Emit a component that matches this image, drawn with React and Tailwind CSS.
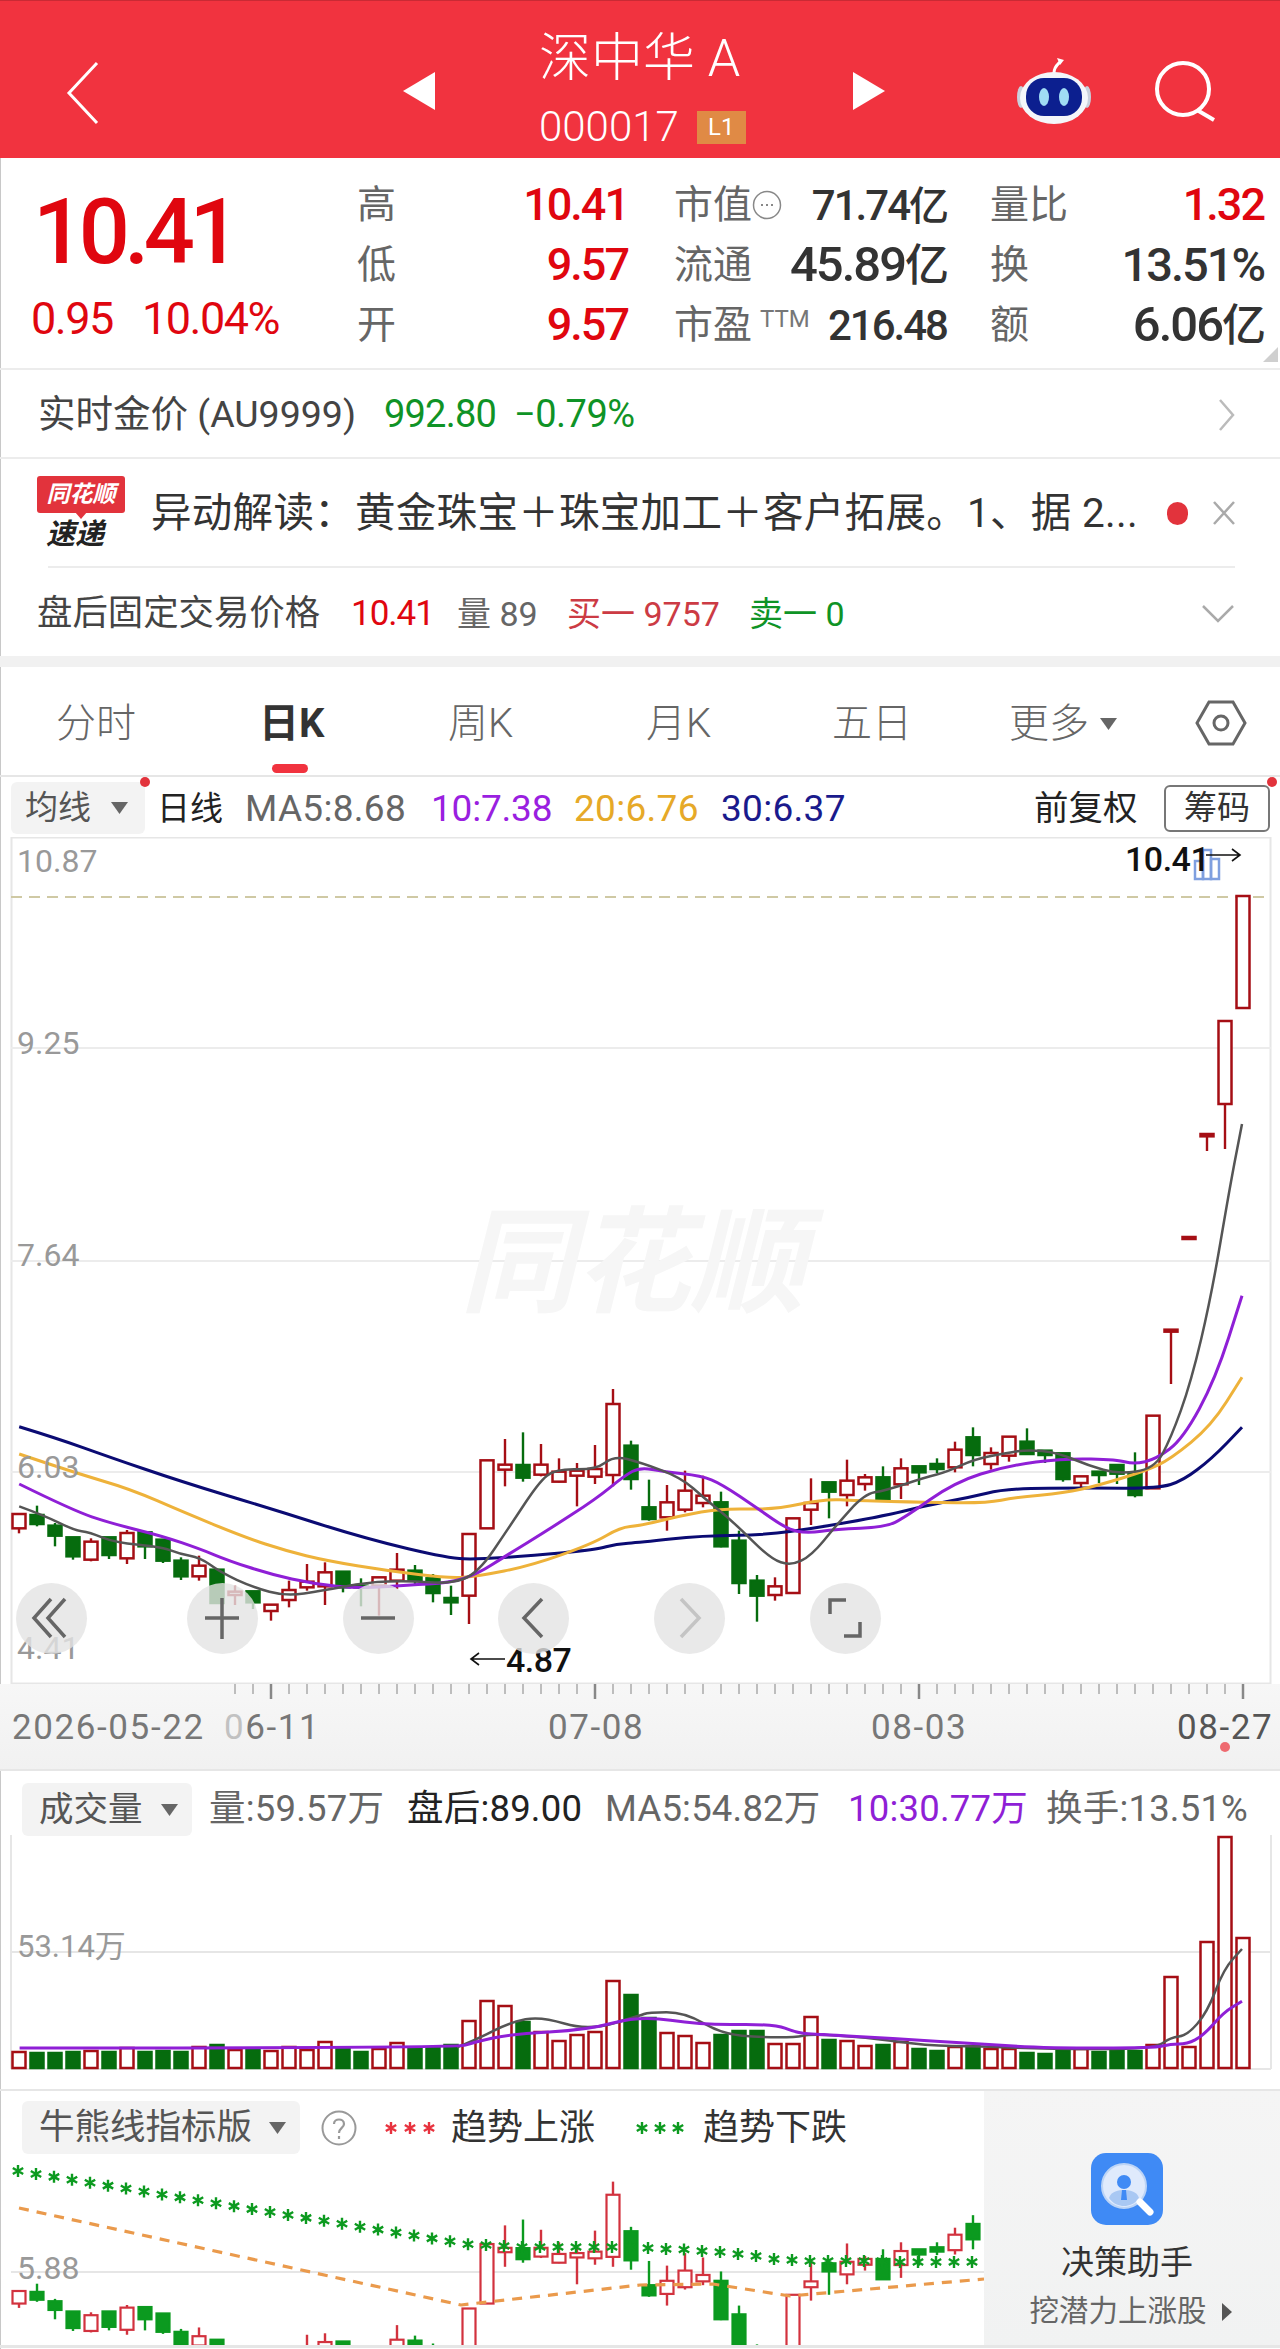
import React from "react";

// candle data read off the chart: [high, bodyTop, bodyBottom, low, isUp], y in 3x zoom units
const candles = [
  [645, 645, 688, 703, 1], [620, 648, 675, 682, 0], [672, 680, 710, 742, 0], [715, 715, 772, 782, 0],
  [718, 728, 782, 787, 1], [715, 715, 768, 780, 0], [693, 702, 778, 795, 1], [700, 700, 742, 780, 0],
  [722, 722, 785, 792, 0], [775, 785, 832, 843, 0], [770, 800, 832, 845, 1], [812, 812, 912, 912, 0],
  [860, 878, 888, 918, 1], [877, 877, 910, 930, 0], [917, 917, 936, 965, 1], [845, 873, 903, 925, 1],
  [795, 848, 865, 875, 1], [790, 820, 862, 918, 1], [818, 818, 865, 880, 0], [838, 860, 865, 922, 0],
  [835, 835, 860, 950, 1], [762, 812, 845, 870, 1], [798, 815, 845, 855, 0], [825, 838, 882, 910, 0],
  [860, 897, 910, 948, 0], [705, 705, 890, 975, 1], [484, 484, 688, 688, 1], [420, 497, 512, 562, 1],
  [400, 498, 536, 548, 0], [435, 497, 527, 532, 1], [478, 518, 548, 550, 1], [492, 515, 530, 622, 1],
  [438, 510, 533, 555, 1], [270, 315, 528, 562, 1], [425, 440, 540, 572, 0], [542, 625, 660, 665, 0],
  [558, 610, 655, 695, 1], [515, 575, 632, 640, 1], [530, 590, 612, 625, 1], [578, 610, 742, 745, 0],
  [695, 725, 852, 885, 0], [828, 845, 890, 968, 0], [835, 862, 888, 905, 1], [658, 658, 882, 882, 1],
  [538, 612, 632, 678, 1], [550, 550, 578, 658, 0], [482, 545, 588, 622, 1], [525, 535, 555, 575, 1],
  [502, 535, 605, 605, 0], [478, 508, 556, 600, 1], [502, 502, 520, 558, 0], [478, 495, 510, 522, 0],
  [428, 452, 505, 520, 1], [385, 415, 468, 502, 0], [445, 462, 495, 512, 1], [413, 413, 470, 488, 1],
  [388, 428, 465, 465, 0], [455, 455, 468, 492, 0], [463, 463, 540, 548, 0], [532, 532, 552, 565, 1],
  [518, 518, 528, 552, 0], [498, 498, 524, 555, 0], [460, 525, 588, 595, 0], [350, 350, 568, 568, 1],
  [92, 92, 98, 255, 1], [-186, -186, -180, -180, 1], [-495, -495, -488, -444, 1], [-834, -834, -585, -450, 1],
  [-1209, -1209, -873, -873, 1],
];

const volTops = [
  2053, 2054, 2054, 2053, 2052, 2053, 2049, 2053, 2052, 2053, 2048, 2046, 2051, 2050, 2052, 2048, 2051, 2043,
  2050, 2053, 2050, 2044, 2050, 2049, 2046, 2022, 2002, 2007, 2023, 2033, 2042, 2036, 2033, 1982, 1996, 2019,
  2034, 2037, 2044, 2036, 2032, 2032, 2045, 2045, 2018, 2041, 2042, 2047, 2046, 2043, 2050, 2052, 2048, 2047,
  2050, 2050, 2054, 2055, 2051, 2050, 2053, 2052, 2052, 2046, 1978, 2048, 1943, 1838, 1939,
];

const cx = (i) => 19 + 18 * i;
const yMain = (z) => 1300 + z / 3;
const yLow = (z) => 2292 + 0.875 * (yMain(z) - 1515);

// left half and right half of the zoomed chart, in zoom units
const L = (pts) => pts.map(([x, y]) => [x / 2.45, 1300 + y / 3]);
const R = (pts) => pts.map(([x, y]) => [640 + x / 2.45, 1300 + y / 3]);

const smooth = (pts) => {
  let d = `M${pts[0][0].toFixed(1)} ${pts[0][1].toFixed(1)}`;
  for (let i = 1; i < pts.length - 1; i++) {
    const mx = (pts[i][0] + pts[i + 1][0]) / 2;
    const my = (pts[i][1] + pts[i + 1][1]) / 2;
    d += ` Q${pts[i][0].toFixed(1)} ${pts[i][1].toFixed(1)} ${mx.toFixed(1)} ${my.toFixed(1)}`;
  }
  const last = pts[pts.length - 1];
  return d + ` L${last[0].toFixed(1)} ${last[1].toFixed(1)}`;
};

const ma30 = [
  ...L([[47, 383], [140, 418], [270, 475], [445, 548], [660, 628], [900, 720], [1100, 778], [1170, 781], [1300, 770], [1460, 752], [1510, 735]]),
  ...R([[0, 730], [150, 710], [330, 708], [590, 653], [700, 620], [800, 597], [900, 568], [1100, 567], [1270, 568], [1330, 545], [1400, 480], [1475, 385]]),
];
const ma20 = [
  ...L([[47, 465], [180, 520], [320, 570], [450, 640], [600, 715], [700, 755], [800, 785], [950, 815], [1100, 838], [1170, 832], [1300, 800], [1450, 735], [1520, 685]]),
  ...R([[0, 680], [100, 650], [200, 628], [330, 632], [450, 600], [530, 605], [700, 610], [850, 612], [920, 595], [1040, 582], [1120, 560], [1240, 515], [1300, 480], [1400, 380], [1475, 235]]),
];
const ma10 = [
  ...L([[47, 555], [180, 635], [270, 672], [400, 712], [490, 750], [560, 785], [660, 825], [770, 855], [880, 868], [1000, 858], [1100, 852], [1170, 825], [1240, 770], [1340, 695], [1460, 600], [1530, 530]]),
  ...R([[0, 505], [60, 518], [150, 530], [200, 555], [290, 630], [360, 690], [410, 703], [480, 690], [600, 685], [650, 655], [770, 550], [900, 500], [1040, 478], [1170, 482], [1210, 496], [1265, 480], [1330, 420], [1410, 240], [1475, -10]]),
];
const ma5 = [
  ...L([[47, 622], [110, 650], [180, 693], [220, 700], [280, 730], [400, 745], [440, 765], [490, 775], [540, 820], [620, 865], [700, 892], [790, 875], [900, 850], [1000, 845], [1100, 855], [1170, 825], [1250, 680], [1320, 550], [1360, 510], [1460, 512], [1505, 470]]),
  ...R([[0, 490], [100, 535], [160, 600], [230, 670], [320, 780], [370, 800], [420, 770], [480, 680], [550, 585], [600, 575], [700, 535], [750, 520], [820, 480], [900, 462], [950, 452], [1020, 460], [1100, 500], [1170, 525], [1260, 510], [1300, 420], [1350, 250], [1400, -10]]),
  [1230, 1187], [1242, 1125],
];

const V = (half, pts) => pts.map(([x, y]) => [(half ? 640 : 0) + x / 2.45, 1750 + y / 3]);
const vol5 = [
  ...V(0, [[1120, 895], [1170, 870], [1250, 820], [1325, 802], [1440, 845]]),
  ...V(1, [[0, 800], [20, 790], [110, 790], [200, 855], [300, 865], [380, 865], [420, 855], [560, 865], [700, 890], [830, 892], [1000, 900], [1260, 900], [1300, 865], [1340, 860], [1390, 790], [1430, 660], [1475, 600]]),
];
const vol10 = [
  ...V(0, [[48, 897], [1120, 897], [1160, 880], [1250, 855], [1440, 843]]),
  ...V(1, [[0, 800], [150, 828], [330, 825], [380, 850], [420, 855], [620, 868], [830, 885], [1000, 897], [1260, 897], [1300, 885], [1340, 885], [1380, 860], [1430, 790], [1475, 757]]),
];

const starY = [
  ...Array.from({ length: 26 }, (_, i) => 2172 + i * 2.93),
  2246, 2247, 2248, 2248, 2248, 2248, 2248, 2248, 2248, 2249, 2250, 2250.5, 2252, 2253, 2255, 2257, 2260, 2261, 2262, 2262, 2262, 2262, 2262, 2263, 2263, 2263, 2263, 2263,
];

const Star = ({ x, y, r = 6, color }) => {
  const a = r * 0.5;
  const b = r * 0.866;
  return (
    <path
      d={`M${x} ${y - r}V${y + r}M${x - b} ${y - a}L${x + b} ${y + a}M${x - b} ${y + a}L${x + b} ${y - a}`}
      stroke={color}
      strokeWidth="2.4"
      fill="none"
    />
  );
};

const Candles = ({ yOf, upColor, downColor, count, sw = 2.5 }) =>
  candles.slice(0, count).map(([hi, top, bot, lo, up], i) => {
    const x = cx(i);
    const color = up ? upColor : downColor;
    return (
      <g key={i}>
        <line x1={x} x2={x} y1={yOf(hi)} y2={yOf(lo)} stroke={color} strokeWidth="2.4" />
        <rect
          x={x - 6.5}
          y={yOf(top)}
          width="13"
          height={Math.max(yOf(bot) - yOf(top), 1)}
          fill={up ? "#fff" : color}
          stroke={color}
          strokeWidth={sw}
        />
      </g>
    );
  });

const Triangle = ({ className }) => (
  <svg width="19" height="14" viewBox="0 0 19 14" className={className}>
    <path d="M1 1H18L9.5 13Z" fill="#666" />
  </svg>
);

const Robot = () => (
  <svg width="76" height="70" viewBox="0 0 76 70">
    <path d="M38 18C38 12 41 10 44 7" stroke="#fff" strokeWidth="3" fill="none" />
    <path d="M41 3L48 5L44 10Z" fill="#fff" />
    <ellipse cx="5" cy="42" rx="4" ry="11" fill="#c9d0dc" />
    <ellipse cx="71" cy="42" rx="4" ry="11" fill="#c9d0dc" />
    <ellipse cx="38" cy="43" rx="34" ry="26" fill="#f4f6fa" />
    <rect x="10" y="23" width="56" height="38" rx="18" fill="#0c1f8f" />
    <ellipse cx="28" cy="42" rx="5" ry="9" fill="#9fdcf5" />
    <ellipse cx="48" cy="42" rx="5" ry="9" fill="#9fdcf5" />
  </svg>
);

const Chip = ({ label, className }) => (
  <div className={`flex items-center bg-[#f3f3f3] rounded-md ${className}`}>
    <span>{label}</span>
    <Triangle className="ml-auto" />
  </div>
);

const StatRow = ({ label, value, color, size = "text-[45px]" }) => (
  <div className="flex items-center justify-between h-[60px]">
    <span className="text-[39px] text-[#666] flex items-center">{label}</span>
    <span className={`tracking-[-2px] font-medium ${size} ${color}`}>{value}</span>
  </div>
);

const PRICE = "text-[#e0060f]";
const DARK = "text-[#333]";

const priceLabels = [
  ["10.87", 846], ["9.25", 1028], ["7.64", 1240], ["6.03", 1452], ["4.41", 1633],
];

export default function App() {
  return (
    <div className="relative w-[1280px] h-[2349px] overflow-hidden bg-white font-['Roboto','Noto_Sans_CJK_SC',sans-serif] shadow-[inset_1px_0_0_#c8c8c8]">
      {/* title bar */}
      <div className="flex items-center h-[158px] pt-[22px] bg-[#f1333f] border-t border-[#c92a34]">
        <svg width="36" height="64" viewBox="0 0 36 64" className="ml-[65px] mt-[4px]">
          <path d="M32 2L4 32L32 62" stroke="#fff" strokeWidth="3" fill="none" />
        </svg>
        <svg width="34" height="38" viewBox="0 0 34 38" className="ml-[301px]">
          <path d="M33 0V38L1 19Z" fill="#fff" />
        </svg>
        <div className="ml-[106px] w-[315px] flex flex-col text-white">
          <div className="text-[52px] leading-[58px] font-light mt-[-4px] ml-[-3px]">深中华 A</div>
          <div className="flex items-center mt-[19px] h-[40px] ml-[-3px]">
            <span className="text-[42px] font-light leading-none">000017</span>
            <span className="ml-[18px] w-[49px] h-[33px] bg-[#e08a45] flex items-center justify-center text-[24px] leading-none">
              L1
            </span>
          </div>
        </div>
        <svg width="34" height="38" viewBox="0 0 34 38" className="ml-[-5px]">
          <path d="M1 0V38L33 19Z" fill="#fff" />
        </svg>
        <div className="ml-[130px] mt-[-2px]">
          <Robot />
        </div>
        <svg width="62" height="62" viewBox="0 0 62 62" className="ml-[62px]">
          <circle cx="29" cy="29" r="26" stroke="#fff" strokeWidth="4" fill="none" />
          <path d="M43 50L60 60" stroke="#fff" strokeWidth="4" />
        </svg>
      </div>

      {/* quote */}
      <div className="relative flex h-[212px] border-b-2 border-[#ececec]">
        <div className="w-[357px] pl-[31px] pt-[30px] flex flex-col">
          <div className={`text-[90px] leading-none font-medium tracking-[-5.5px] ml-[2px] ${PRICE}`}>10.41</div>
          <div className={`flex text-[45px] leading-none mt-[18px] tracking-[-1.5px] ${PRICE}`}>
            <span className="w-[111px]">0.95</span>
            <span>10.04%</span>
          </div>
        </div>
        <div className="w-[271px] pt-[17px]">
          <StatRow label="高" value="10.41" color={PRICE} />
          <StatRow label="低" value="9.57" color={PRICE} />
          <StatRow label="开" value="9.57" color={PRICE} />
        </div>
        <div className="w-[273px] ml-[46px] pt-[17px]">
          <StatRow
            label={
              <>
                市值
                <svg width="30" height="30" viewBox="0 0 30 30">
                  <circle cx="15" cy="15" r="13.5" stroke="#888" strokeWidth="1.5" fill="none" />
                  <path d="M9 15h2M14 15h2M19 15h2" stroke="#888" strokeWidth="2" />
                </svg>
              </>
            }
            value={
              <>
                71.74<span className="text-[40px]">亿</span>
              </>
            }
            size="text-[42px]"
            color={DARK}
          />
          <StatRow
            label="流通"
            value={
              <>
                45.89<span className="text-[44px]">亿</span>
              </>
            }
            size="text-[49px]"
            color={DARK}
          />
          <StatRow
            label={
              <>
                市盈<span className="text-[24px] ml-[8px] mt-[-12px] text-[#777]">TTM</span>
              </>
            }
            value="216.48"
            size="text-[42px]"
            color={DARK}
          />
        </div>
        <div className="w-[274px] ml-[43px] pt-[17px]">
          <StatRow label="量比" value="1.32" color={PRICE} />
          <StatRow label="换" value="13.51%" color={DARK} size="text-[47px]" />
          <StatRow
            label="额"
            value={
              <>
                6.06<span className="text-[44px]">亿</span>
              </>
            }
            size="text-[49px]"
            color={DARK}
          />
        </div>
        <div className="absolute right-[2px] bottom-[6px] w-0 h-0 border-l-[15px] border-l-transparent border-b-[15px] border-b-[#cfcfcf]" />
      </div>

      {/* gold price */}
      <div className="flex items-center h-[89px] pl-[38px] pt-[2px] border-b-2 border-[#ececec]">
        <span className="text-[37.5px] text-[#444] w-[346px] whitespace-nowrap">实时金价 (AU9999)</span>
        <span className="text-[38px] text-[#0f9326] tracking-[-0.8px] w-[130px]">992.80</span>
        <span className="text-[38px] text-[#0f9326] tracking-[-0.5px]">−0.79%</span>
        <svg width="18" height="34" viewBox="0 0 18 34" className="ml-auto mr-[44px]">
          <path d="M2 2L15 17L2 32" stroke="#bbb" strokeWidth="2.5" fill="none" />
        </svg>
      </div>

      {/* news ticker */}
      <div className="flex items-center h-[107px] pl-[37px]">
        <div className="w-[114px] flex flex-col">
          <div className="relative w-[88px] h-[37px] bg-[#e2333c] rounded-[3px] flex items-center justify-center text-white text-[23px] font-bold italic leading-none">
            同花顺
            <div className="absolute left-[38px] bottom-[-6px] w-0 h-0 border-x-[6px] border-x-transparent border-t-[7px] border-t-[#e2333c]" />
          </div>
          <div className="text-[29px] leading-none font-bold italic text-[#222] mt-[7px] ml-[9px]">速递</div>
        </div>
        <span className="text-[40.5px] tracking-[0.3px] text-[#333] whitespace-nowrap mt-[1px]">异动解读：黄金珠宝＋珠宝加工＋客户拓展。1、据 2...</span>
        <div className="w-[21px] h-[23px] rounded-full bg-[#e2333c] absolute left-[1167px] top-[502px]" />
        <svg width="24" height="26" viewBox="0 0 24 26" className="absolute left-[1212px] top-[500px]">
          <path d="M2 2L22 24M22 2L2 24" stroke="#aaa" strokeWidth="2.5" />
        </svg>
      </div>
      <div className="h-[2px] ml-[48px] w-[1187px] bg-[#ececec]" />

      {/* after-hours */}
      <div className="flex items-center h-[88px] pl-[37px] pt-[4px]">
        <span className="text-[35.4px] text-[#444] w-[314px] whitespace-nowrap">盘后固定交易价格</span>
        <span className={`text-[35px] w-[106px] tracking-[-1px] ${PRICE}`}>10.41</span>
        <span className="text-[34px] text-[#666] w-[110px] whitespace-nowrap">量 89</span>
        <span className="text-[34px] text-[#cc3b44] w-[182px] whitespace-nowrap">买一 9757</span>
        <span className="text-[34px] text-[#0f9326] whitespace-nowrap">卖一 0</span>
        <svg width="34" height="20" viewBox="0 0 34 20" className="ml-auto mr-[45px]">
          <path d="M2 2L17 17L32 2" stroke="#aaa" strokeWidth="2.5" fill="none" />
        </svg>
      </div>
      <div className="h-[11px] bg-[#f1f1f1]" />

      {/* period tabs */}
      <div className="flex items-center h-[110px] pl-[56px] pt-[6px] border-b-2 border-[#e6e6e6] text-[40px] text-[#666] font-light">
        <div className="w-[203px]">分时</div>
        <div className="relative w-[189px] font-bold text-[#333]">
          日K
          <div className="absolute left-[13px] top-[70px] w-[36px] h-[9px] rounded-full bg-[#f1333f]" />
        </div>
        <div className="w-[198px]">周K</div>
        <div className="w-[186px]">月K</div>
        <div className="w-[177px]">五日</div>
        <div className="w-[186px] flex items-center">
          更多
          <svg width="19" height="14" viewBox="0 0 19 14" className="ml-[10px]">
            <path d="M1 1H18L9.5 13Z" fill="#666" />
          </svg>
        </div>
        <svg width="52" height="46" viewBox="0 0 52 46" className="mt-[-2px]">
          <path d="M14 2H38L50 23L38 44H14L2 23Z" stroke="#666" strokeWidth="3" fill="none" />
          <circle cx="26" cy="23" r="7" stroke="#666" strokeWidth="3" fill="none" />
        </svg>
      </div>

      {/* moving average legend */}
      <div className="relative flex items-center h-[60px] pl-[11px] pt-[4px] text-[37px] tracking-[0.3px] whitespace-nowrap">
        <Chip label="均线" className="w-[134px] h-[52px] pl-[14px] pr-[16px] text-[33px] tracking-normal text-[#555] mt-[-2px]" />
        <span className="absolute left-[140px] top-[0px] w-[10px] h-[10px] rounded-full bg-[#e2333c]" />
        <span className="ml-[12px] w-[88px] text-[33px] tracking-normal text-[#222]">日线</span>
        <span className="w-[186px] text-[#666]">MA5:8.68</span>
        <span className="w-[143px] text-[#9a1fe0] tracking-[-0.2px]">10:7.38</span>
        <span className="w-[147px] text-[#e6a928]">20:6.76</span>
        <span className="w-[313px] text-[#1a1a8c]">30:6.37</span>
        <span className="w-[130px] text-[34.5px] tracking-normal text-[#222]">前复权</span>
        <div className="w-[106px] h-[47px] border-2 border-[#777] rounded-md flex items-center justify-center text-[33px] tracking-normal text-[#333] mt-[-2px]">
          筹码
        </div>
        <span className="absolute left-[1267px] top-[0px] w-[10px] h-[10px] rounded-full bg-[#e2333c]" />
      </div>

      {/* candles */}
      <div className="relative h-[847px]">
        <svg width="1280" height="847" viewBox="0 838 1280 847" className="block">
          <rect x="11.5" y="838.5" width="1259" height="846" fill="none" stroke="#e6e6e6" strokeWidth="2" />
          <line x1="11" x2="1271" y1="1049" y2="1049" stroke="#ececec" strokeWidth="2" />
          <line x1="11" x2="1271" y1="1262" y2="1262" stroke="#ececec" strokeWidth="2" />
          <line x1="11" x2="1271" y1="1473" y2="1473" stroke="#ececec" strokeWidth="2" />
          <line x1="11" x2="1271" y1="898" y2="898" stroke="#cfc9a4" strokeWidth="2" strokeDasharray="11 7" />
          <Candles yOf={yMain} upColor="#a50e14" downColor="#066c0e" count={69} />
          <path d={smooth(ma30)} stroke="#0b0b73" strokeWidth="3" fill="none" />
          <path d={smooth(ma20)} stroke="#eeb23a" strokeWidth="3" fill="none" />
          <path d={smooth(ma10)} stroke="#8f1fd6" strokeWidth="3" fill="none" />
          <path d={smooth(ma5)} stroke="#555" strokeWidth="2.5" fill="none" />
          <g fill="none" stroke="#7f9fdf" strokeWidth="2.5">
            <rect x="1195" y="862" width="8" height="18" />
            <rect x="1203" y="851" width="8" height="29" />
            <rect x="1211" y="860" width="8" height="20" />
          </g>
          <path d="M1206 856H1240M1232 850L1240 856L1232 862" stroke="#111" strokeWidth="1.6" fill="none" />
          <path d="M505 1660H471M479 1654L471 1660L479 1666" stroke="#111" strokeWidth="1.6" fill="none" />
        </svg>
        <div className="absolute left-[460px] top-[369px] text-[115px] leading-none font-bold italic text-[#f6f6f6] whitespace-nowrap">
          同花顺
        </div>
        {priceLabels.map(([label, y]) => (
          <span key={label} className="absolute left-[17px] text-[32px] leading-none text-[#999]" style={{ top: y - 838 }}>
            {label}
          </span>
        ))}
        <span className="absolute left-[1125px] top-[5px] text-[34px] leading-none font-medium text-[#111] tracking-[-0.5px]">10.41</span>
        <span className="absolute left-[506px] top-[806px] text-[34px] leading-none font-medium text-[#111] tracking-[-0.5px]">4.87</span>
        {[
          [51, "first"], [222, "plus"], [378, "minus"], [533.5, "prev"], [689, "next"], [845, "full"],
        ].map(([x, kind]) => (
          <div
            key={kind}
            className="absolute w-[71px] h-[71px] rounded-full bg-[#e4e4e4]/80 flex items-center justify-center"
            style={{ left: x - 35.5, top: 1619 - 838 - 35.5 }}
          >
            <svg width="40" height="46" viewBox="0 0 40 46" fill="none" stroke={kind === "next" ? "#c4c4c4" : "#666"} strokeWidth="3.5">
              {kind === "first" && <path d="M20 4L3 23L20 42M34 4L17 23L34 42" />}
              {kind === "plus" && <path d="M20 3V44M3 23H37" />}
              {kind === "minus" && <path d="M3 23H37" />}
              {kind === "prev" && <path d="M28 4L10 23L28 42" />}
              {kind === "next" && <path d="M12 4L30 23L12 42" />}
              {kind === "full" && <path d="M5 19V5H21M35 27V41H19" />}
            </svg>
          </div>
        ))}
      </div>

      {/* date axis */}
      <div className="relative h-[85px] bg-gradient-to-b from-[#f7f7f7] to-[#f1f1f1]">
        <svg width="1280" height="16" viewBox="0 1685 1280 16" className="block">
          {Array.from({ length: 57 }, (_, k) => k + 12).map((i) => {
            const major = (i - 14) % 18 === 0;
            return (
              <line
                key={i}
                x1={cx(i)}
                x2={cx(i)}
                y1="1685"
                y2={major ? 1700 : 1695}
                stroke={major ? "#888" : "#aaa"}
                strokeWidth={major ? 2.5 : 1.5}
              />
            );
          })}
        </svg>
        <div className="flex pl-[12px] mt-[9px] text-[35px] leading-[38px] tracking-[1.6px] text-[#777] whitespace-nowrap">
          <span className="w-[212px]">2026-05-22</span>
          <span className="w-[324px]">
            <span className="opacity-40">0</span>6-11
          </span>
          <span className="w-[323px]">07-08</span>
          <span className="w-[306px]">08-03</span>
          <span className="text-[#555]">08-27</span>
        </div>
        <span className="absolute left-[1220px] top-[58px] w-[10px] h-[10px] rounded-full bg-[#ee6a70]" />
      </div>

      {/* volume */}
      <div className="border-t-2 border-[#e6e6e6]">
        <div className="flex items-center h-[64px] pl-[22px] pt-[13px] text-[36.5px] tracking-[0.2px] whitespace-nowrap">
          <Chip label="成交量" className="w-[170px] h-[53px] pl-[17px] pr-[13px] text-[34.5px] tracking-normal text-[#555]" />
          <span className="ml-[17px] w-[198px] text-[#666]">量:59.57万</span>
          <span className="w-[198px] text-[#222]">盘后:89.00</span>
          <span className="w-[243px] text-[#666]">MA5:54.82万</span>
          <span className="w-[198px] text-[#8f1fd6]">10:30.77万</span>
          <span className="text-[#666]">换手:13.51%</span>
        </div>
        <div className="relative h-[235px]">
          <svg width="1280" height="235" viewBox="0 1836 1280 235" className="block">
            <line x1="11" x2="1271" y1="1953" y2="1953" stroke="#e6e6e6" strokeWidth="2" />
            <line x1="11" x2="1271" y1="2070" y2="2070" stroke="#e6e6e6" strokeWidth="2" />
            <line x1="11" x2="11" y1="1836" y2="2070" stroke="#e6e6e6" strokeWidth="2" />
            <line x1="1271" x2="1271" y1="1836" y2="2070" stroke="#e6e6e6" strokeWidth="2" />
            {volTops.map((t, i) => {
              const color = candles[i][4] ? "#a50e14" : "#066c0e";
              return (
                <rect
                  key={i}
                  x={cx(i) - 6.5}
                  y={t}
                  width="13"
                  height={2069 - t}
                  fill={candles[i][4] ? "#fff" : color}
                  stroke={color}
                  strokeWidth="2.5"
                />
              );
            })}
            <path d={smooth(vol5)} stroke="#555" strokeWidth="2.5" fill="none" />
            <path d={smooth(vol10)} stroke="#8f1fd6" strokeWidth="3" fill="none" />
          </svg>
          <span className="absolute left-[17px] top-[96px] text-[31px] leading-none text-[#999] whitespace-nowrap">53.14万</span>
        </div>
      </div>

      {/* bull/bear indicator */}
      <div className="h-[19px]" />
      <div className="relative border-t-2 border-[#e6e6e6]">
        <div className="flex items-center h-[69px] pl-[22px] pt-[4px] whitespace-nowrap">
          <Chip label="牛熊线指标版" className="w-[278px] h-[53px] pl-[17px] pr-[13px] text-[35.5px] text-[#555]" />
          <svg width="36" height="36" viewBox="0 0 36 36" className="ml-[21px]">
            <circle cx="18" cy="18" r="16.5" stroke="#999" strokeWidth="2" fill="none" />
            <path d="M13 14C13 8 23 8 23 14C23 18 18 18 18 23M18 26V29" stroke="#999" strokeWidth="2.2" fill="none" />
          </svg>
          <svg width="52" height="16" viewBox="0 0 52 16" className="ml-[27px]">
            <Star x={7} y={8} color="#e8323e" />
            <Star x={26} y={8} color="#e8323e" />
            <Star x={45} y={8} color="#e8323e" />
          </svg>
          <span className="ml-[15px] w-[184px] text-[36px] text-[#333]">趋势上涨</span>
          <svg width="52" height="16" viewBox="0 0 52 16">
            <Star x={7} y={8} color="#0c9a1f" />
            <Star x={25} y={8} color="#0c9a1f" />
            <Star x={43} y={8} color="#0c9a1f" />
          </svg>
          <span className="ml-[16px] text-[36px] text-[#333]">趋势下跌</span>
        </div>
        <svg width="1280" height="185" viewBox="0 2161 1280 185" className="block">
          <line x1="11" x2="1271" y1="2273" y2="2273" stroke="#e6e6e6" strokeWidth="2" />
          <Candles yOf={yLow} upColor="#d2323e" downColor="#0b9a1f" count={54} sw={2.2} />
          <path
            d="M19 2209L461 2306L640 2286L713 2285L790 2297L984 2280"
            stroke="#ea9a4c"
            strokeWidth="3.2"
            strokeDasharray="10 8"
            fill="none"
          />
          {starY.map((y, i) => (
            <Star key={i} x={cx(i) - 1} y={y} color="#0c9a1f" />
          ))}
        </svg>
        <span className="absolute left-[17px] top-[161px] text-[32px] leading-none text-[#999]">5.88</span>
        <div className="absolute left-[984px] top-0 bottom-0 w-[296px] bg-gradient-to-b from-[#f5f5f5] to-[#f1f2f2] flex flex-col items-center pt-[62px] pr-[10px]">
          <svg width="72" height="72" viewBox="0 0 72 72">
            <rect width="72" height="72" rx="15" fill="#3f8af5" />
            <circle cx="33" cy="33" r="22" fill="#dfeafc" stroke="#bcd4f6" strokeWidth="2" />
            <circle cx="33" cy="29" r="7" fill="#3f8af5" />
            <path d="M18 45C20 38 28 37 33 37C38 37 46 38 48 45C44 51 38 53 33 53C28 53 22 51 18 45Z" fill="#a9c8f3" />
            <path d="M31 37H35L36 47H30Z" fill="#3f8af5" />
            <path d="M49 49L59 59" stroke="#fff" strokeWidth="7" strokeLinecap="round" />
          </svg>
          <div className="text-[33px] leading-none text-[#333] mt-[21px]">决策助手</div>
          <div className="flex items-center text-[29.5px] leading-none text-[#666] mt-[18px] ml-[8px]">
            挖潜力上涨股
            <svg width="12" height="20" viewBox="0 0 12 20" className="ml-[14px]">
              <path d="M1 1V19L11 10Z" fill="#555" />
            </svg>
          </div>
        </div>
      </div>
      <div className="h-[3px] bg-[#e6e6e6]" />
    </div>
  );
}
